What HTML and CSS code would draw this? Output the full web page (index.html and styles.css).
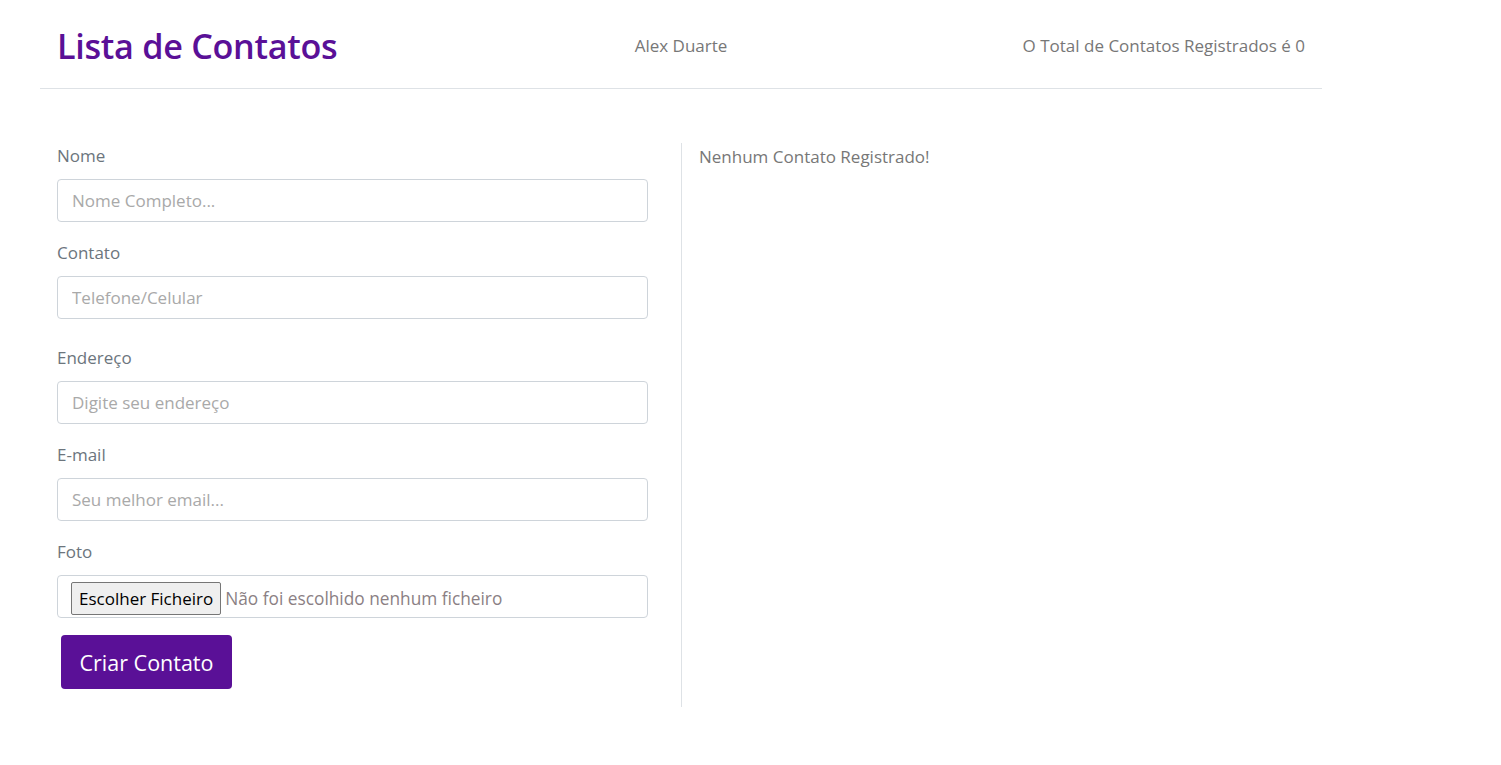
FILE: index.html
```html
<!DOCTYPE html>
<html lang="pt">
<head>
<meta charset="utf-8">
<title>Lista de Contatos</title>
<link rel="stylesheet" href="styles.css">
</head>
<body>
<div class="page">
  <header class="topbar">
    <h1 class="brand">Lista de Contatos</h1>
    <span class="author">Alex Duarte</span>
    <span class="total">O Total de Contatos Registrados é 0</span>
  </header>
  <main class="content">
    <form class="form-col">
      <div class="field">
        <label class="label">Nome</label>
        <input class="input" type="text" placeholder="Nome Completo...">
      </div>
      <div class="field">
        <label class="label">Contato</label>
        <input class="input" type="text" placeholder="Telefone/Celular">
      </div>
      <div class="field field-wide">
        <label class="label">Endereço</label>
        <input class="input" type="text" placeholder="Digite seu endereço">
      </div>
      <div class="field">
        <label class="label">E-mail</label>
        <input class="input" type="text" placeholder="Seu melhor email...">
      </div>
      <div class="field">
        <label class="label">Foto</label>
        <div class="file-box">
          <button type="button" class="file-btn">Escolher Ficheiro</button>
          <span class="file-name">Não foi escolhido nenhum ficheiro</span>
        </div>
      </div>
      <button type="button" class="submit">Criar Contato</button>
    </form>
    <section class="list-col">
      <p class="empty">Nenhum Contato Registrado!</p>
    </section>
  </main>
</div>
</body>
</html>
```
FILE: styles.css
```css
* { box-sizing: border-box; }
body {
  margin: 0;
  background: #fff;
  font-family: "Open Sans", "Noto Sans", sans-serif;
  color: #6c757d;
}
.page {
  width: 1282px;
  margin-left: 40px;
}
.topbar {
  display: grid;
  grid-template-columns: 1fr auto 1fr;
  align-items: center;
  height: 89px;
  padding: 3px 17px 0;
  border-bottom: 1px solid #dee2e6;
}
.brand {
  margin: 0;
  font-size: 34.2px;
  font-weight: 600;
  color: #5a1097;
  letter-spacing: -0.3px;
}
.author, .total {
  font-size: 17px;
  color: #777;
}
.total { justify-self: end; }
.content {
  display: flex;
  padding-top: 54px;
}
.form-col {
  width: 641px;
  padding: 1px 33px 18px 17px;
  display: flex;
  flex-direction: column;
}
.field {
  display: flex;
  flex-direction: column;
  margin-bottom: 19px;
}
.field-wide { margin-top: 8px; }
.label {
  font-size: 17px;
  line-height: 24px;
  margin-bottom: 11px;
  color: #6c757d;
}
.input {
  height: 43px;
  border: 1px solid #ced4da;
  border-radius: 4px;
  padding: 0 14px;
  font: inherit;
  font-size: 17px;
  color: #495057;
}
.input::placeholder { color: #a9a9a9; }
.file-box {
  height: 43px;
  border: 1px solid #ced4da;
  border-radius: 4px;
  display: flex;
  align-items: center;
  padding: 0 13px;
  gap: 4px;
}
.file-btn {
  height: 33px;
  margin-top: 4px;
  padding: 0 7px;
  background: #efefef;
  border: 1px solid #767676;
  border-radius: 2px;
  font-family: inherit;
  font-size: 17px;
  color: #000;
}
.file-name {
  font-size: 17.3px;
  color: #8b7f84;
  margin-top: 4px;
}
.submit {
  align-self: flex-start;
  margin: -2px 0 0 4px;
  width: 171px;
  height: 54px;
  background: #5a1097;
  color: #fff;
  border: none;
  border-radius: 4px;
  font-family: inherit;
  font-size: 21.5px;
}
.list-col {
  flex: 1;
  border-left: 1px solid #dee2e6;
  padding: 2px 17px;
}
.empty {
  margin: 0;
  font-size: 17px;
  line-height: 24px;
  color: #777;
}
```
